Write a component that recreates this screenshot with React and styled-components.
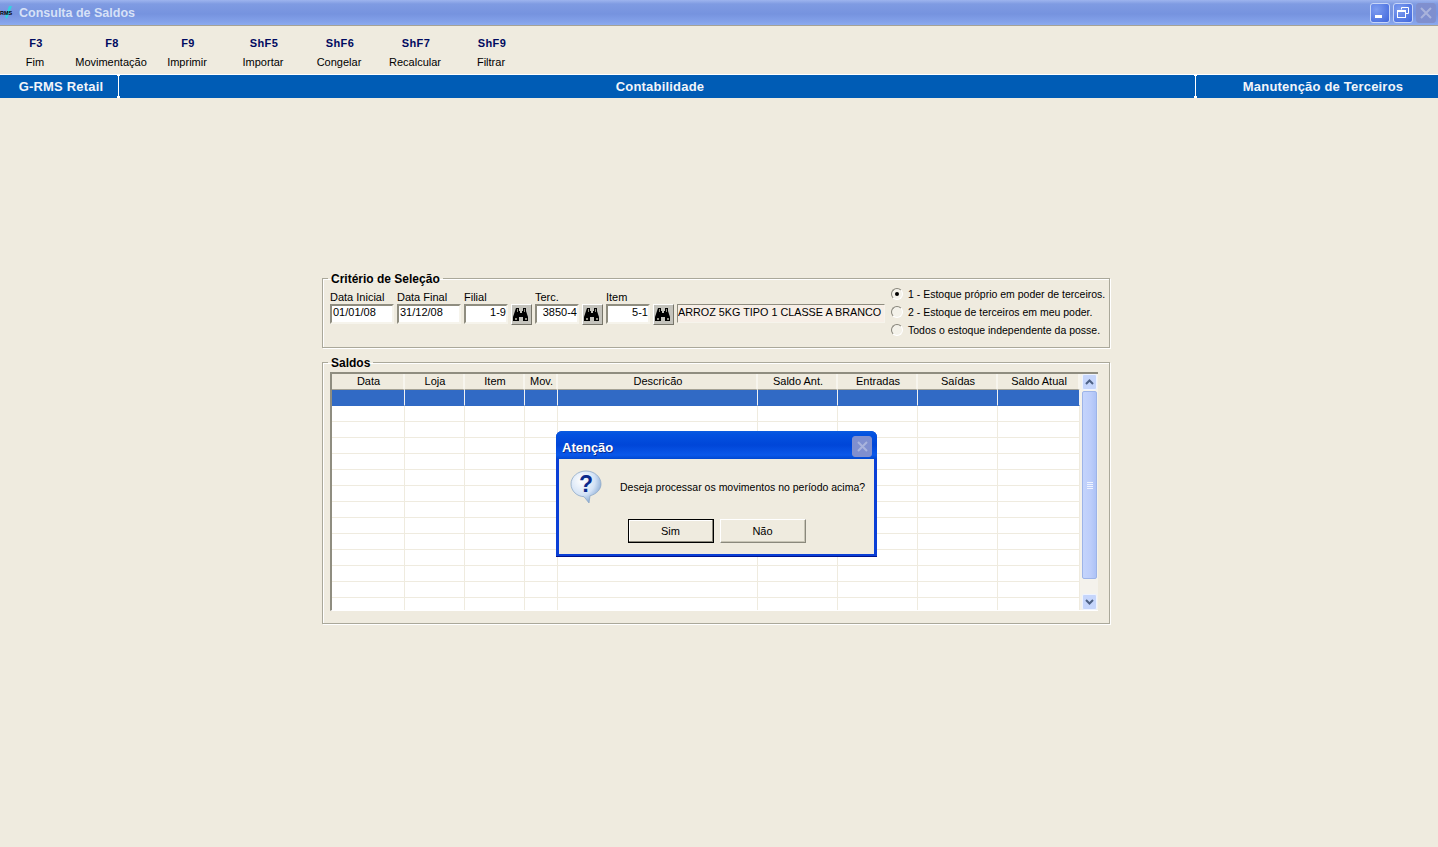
import React from 'react';
import styled, { createGlobalStyle } from 'styled-components';

const Global = createGlobalStyle`
    html, body {
        margin: 0;
        padding: 0;
        width: 1438px;
        height: 847px;
        overflow: hidden;
        background: #efebdf;
        font-family: "Liberation Sans", Arial, sans-serif;
        font-size: 11px;
        color: #000;
    }
`

const Screen = styled.div`
    position: relative;
    width: 1438px;
    height: 847px;
    background: #efebdf;
`

const TitleBar = styled.div`
    height: 26px;
    box-sizing: border-box;
    display: flex;
    align-items: center;
    justify-content: space-between;
    background: linear-gradient(#9db4ee 0, #7f9be2 4px, #7693df 14px, #84a2ea 22px, #8cabf0 25px);
    border-bottom: 1px solid #a5a296;
`

const TitleLeft = styled.div`
    display: flex;
    align-items: center;
    gap: 2px;
`

const TitleText = styled.span`
    font-size: 12.5px;
    font-weight: bold;
    color: #d6e1f7;
    margin-top: 1px;
`

const WinButtons = styled.div`
    display: flex;
    gap: 3px;
    padding-right: 2px;
`

const WinButton = styled.div`
    width: 20px;
    height: 20px;
    box-sizing: border-box;
    border: 1px solid ${p => p.$off ? '#8290cc' : '#c8d6f8'};
    border-radius: 3px;
    background: ${p => p.$off ? '#7f8fcf' : 'radial-gradient(circle at 30% 30%, #7e9df0, #3f66dc)'};
    display: flex;
    align-items: center;
    justify-content: center;
`

const Toolbar = styled.div`
    height: 48px;
    display: flex;
    gap: 4px;
`

const ToolButton = styled.div`
    width: 72px;
    display: flex;
    flex-direction: column;
    align-items: center;
    padding-top: 11px;
`

const ToolKey = styled.span`
    font-size: 11px;
    font-weight: bold;
    letter-spacing: 0.4px;
    color: #000a60;
    height: 19px;
    line-height: 13px;
`

const ToolLabel = styled.span`
    line-height: 13px;
    white-space: nowrap;
    margin-left: -2px;
`

const StatusBar = styled.div`
    height: 23px;
    display: flex;
    background: #005cb5;
    border-top: 1px solid #fff;
`

const StatusCell = styled.div`
    position: relative;
    width: ${p => p.$width}px;
    flex: ${p => p.$width ? 'none' : 1};
    box-sizing: border-box;
    padding-left: ${p => p.$pad}px;
    display: flex;
    align-items: center;
    justify-content: center;
    font-size: 13px;
    font-weight: bold;
    letter-spacing: 0.2px;
    color: #f2f5fa;
    border-right: ${p => p.$last ? 'none' : '1px solid #fff'};
    &::before, &::after {
        content: '';
        display: ${p => p.$last ? 'none' : 'block'};
        position: absolute;
        right: -2px;
        width: 3px;
        height: 2px;
        background: #fff;
    }
    &::before { top: -1px; }
    &::after { bottom: 0; }
`

const Content = styled.div`
    padding: 173px 0 0 322px;
    display: flex;
    flex-direction: column;
    gap: 7px;
`

const Group = styled.fieldset`
    width: 788px;
    min-width: 0;
    height: ${p => p.$height}px;
    box-sizing: border-box;
    margin: 0;
    padding: 0 0 0 8px;
    border: 1px solid #aaa89a;
    box-shadow: 1px 1px 0 #fff, inset 1px 1px 0 #fff;
`

const Legend = styled.legend`
    padding: 0 3px;
    margin-left: -3px;
    font-size: 12px;
    font-weight: bold;
    line-height: 14px;
    position: relative;
    top: 1px;
`

const CriteriaRow = styled.div`
    display: flex;
    align-items: flex-start;
    margin-left: -1px;
`

const Field = styled.div`
    display: flex;
    flex: none;
    flex-direction: column;
    width: ${p => p.$width}px;
    margin-right: 3px;
    padding-top: 6px;
`

const FieldLabel = styled.label`
    line-height: 13px;
    height: 13px;
    white-space: nowrap;
`

const InputBox = styled.div`
    height: 20px;
    box-sizing: border-box;
    background: #fff;
    border: 2px solid;
    border-color: #8f8d80 #f6f4ec #f6f4ec #8f8d80;
    padding: 0 ${p => p.$right ? 0 : 1}px;
    text-align: ${p => p.$right ? 'right' : 'left'};
    line-height: 13px;
    overflow: hidden;
    white-space: nowrap;
`

const SearchButton = styled.button`
    width: 21px;
    height: 21px;
    flex: none;
    margin: 19px 3px 0 0;
    padding: 0 1px 0 0;
    box-sizing: border-box;
    background: #c4c3bc;
    border: 1px solid;
    border-color: #fff #77756a #77756a #fff;
    display: flex;
    align-items: center;
    justify-content: center;
`

const DescBox = styled.div`
    width: 208px;
    height: 19px;
    flex: none;
    margin-top: 19px;
    box-sizing: border-box;
    background: #f7efe7;
    border: 1px solid;
    border-color: #8f8d80 #f6f4ec #f6f4ec #8f8d80;
    padding: 0;
    font-size: 10.8px;
    line-height: 15px;
    overflow: hidden;
`

const RadioList = styled.div`
    margin-left: 6px;
    display: flex;
    flex-direction: column;
    flex: none;
`

const RadioRow = styled.div`
    height: 18px;
    display: flex;
    align-items: center;
    gap: 5px;
    white-space: nowrap;
    font-size: 10.5px;
`

const RadioDot = styled.span`
    width: 12px;
    height: 12px;
    box-sizing: border-box;
    border-radius: 50%;
    background: #f4f2ea;
    border: 1px solid;
    border-color: #86847a #fff #fff #86847a;
    display: flex;
    align-items: center;
    justify-content: center;
    &::after {
        content: '';
        display: ${p => p.$checked ? 'block' : 'none'};
        width: 4px;
        height: 4px;
        border-radius: 50%;
        background: #000;
    }
`

const GridFrame = styled.div`
    display: flex;
    width: 768px;
    height: 239px;
    margin: 3px 0 0 -1px;
    border-left: 2px solid #8f8d80;
    border-top: 2px solid #8f8d80;
    box-sizing: border-box;
    border-bottom: 1px solid #fff;
`

const GridTable = styled.div`
    flex: 1;
    overflow: hidden;
    display: grid;
    grid-template-columns: 73px 60px 60px 33px 200px 80px 80px 80px 82px;
    grid-auto-rows: 16px;
    align-content: start;
`

const HeadCell = styled.div`
    box-sizing: border-box;
    background: #efebdf;
    border-right: 2px solid #f7f5ee;
    border-bottom: 1px solid #a5a296;
    padding-left: 2px;
    text-align: center;
    line-height: 15px;
    white-space: nowrap;
`

const BodyCell = styled.div`
    box-sizing: border-box;
    background: ${p => p.$selected ? '#316ac5' : '#fff'};
    border-right: 1px solid ${p => p.$selected ? '#f2f2f2' : '#efebdf'};
    border-bottom: 1px solid ${p => p.$selected ? '#316ac5' : '#efebdf'};
`

const ScrollBar = styled.div`
    width: 18px;
    flex: none;
    box-sizing: border-box;
    padding: 0 1px 0 2px;
    background: #f4f2ec;
    display: flex;
    flex-direction: column;
`

const ScrollArrow = styled.div`
    height: 16px;
    flex: none;
    box-sizing: border-box;
    background: #c5d5fb;
    border: 1px solid #eef3ff;
    border-radius: 2px;
    display: flex;
    align-items: center;
    justify-content: center;
`

const ScrollThumb = styled.div`
    height: 188px;
    margin: 1px 0 0;
    box-sizing: border-box;
    background: linear-gradient(90deg, #c4d4fc, #bccdfa 60%, #adc2f6);
    border: 1px solid #9db4e8;
    border-radius: 2px;
    display: flex;
    flex-direction: column;
    align-items: center;
    justify-content: center;
    gap: 1px;
`

const Grip = styled.span`
    width: 6px;
    height: 1px;
    background: #eef3ff;
`

const ScrollRest = styled.div`
    flex: 1;
`

const Dialog = styled.div`
    position: absolute;
    left: 556px;
    top: 431px;
    width: 321px;
    height: 126px;
    box-sizing: border-box;
    display: flex;
    flex-direction: column;
    background: #0a3fd6;
    border-radius: 6px 6px 0 0;
    padding: 0 3px 3px;
    box-shadow: inset 0 -1px 0 #00138c;
`

const DialogTitle = styled.div`
    height: 28px;
    flex: none;
    margin: 0 -3px;
    padding: 0 5px 0 6px;
    border-radius: 6px 6px 0 0;
    display: flex;
    align-items: center;
    justify-content: space-between;
    background: linear-gradient(#0a5ce0 0, #0352e0 3px, #0046d8 14px, #0a58ea 24px, #0048d0 28px);
`

const DialogCaption = styled.span`
    font-size: 13px;
    font-weight: bold;
    color: #fff;
    text-shadow: 1px 1px 0 #0a2c8c;
    margin-top: 4px;
`

const DialogClose = styled(WinButton)`
    height: 21px;
    margin-top: 2px;
`

const DialogBody = styled.div`
    flex: 1;
    background: #efebdf;
    display: flex;
    flex-direction: column;
    padding: 11px 0 0 11px;
`

const DialogMessage = styled.div`
    display: flex;
    align-items: center;
    gap: 18px;
    height: 34px;
    white-space: nowrap;
    font-size: 10.5px;
`

const DialogButtons = styled.div`
    display: flex;
    justify-content: center;
    gap: 6px;
    margin-top: 15px;
    margin-left: -11px;
`

const DialogButton = styled.button`
    width: 86px;
    height: 24px;
    padding: 0;
    box-sizing: border-box;
    background: #efebdf;
    font: inherit;
    color: #000;
    border: 1px solid;
    border-color: ${p => p.$focus ? '#000' : '#fff #8a887c #8a887c #fff'};
    box-shadow: ${p => p.$focus
        ? 'inset -1px -1px 0 #8a887c, inset 1px 1px 0 #fff'
        : 'inset -1px -1px 0 #c8c5b6'};
`

const QuestionSvg = styled.svg`
    flex: none;
`

const TOOLS = [
    ['F3', 'Fim'], ['F8', 'Movimentação'], ['F9', 'Imprimir'], ['ShF5', 'Importar'],
    ['ShF6', 'Congelar'], ['ShF7', 'Recalcular'], ['ShF9', 'Filtrar'],
];

const COLUMNS = ['Data', 'Loja', 'Item', 'Mov.', 'Descricão', 'Saldo Ant.', 'Entradas', 'Saídas', 'Saldo Atual'];

const RADIOS = [
    '1 - Estoque próprio em poder de terceiros.',
    '2 - Estoque de terceiros em meu poder.',
    'Todos o estoque independente da posse.',
];

const ROW_COUNT = 14;

const Binoculars = () => (
    <svg width="16" height="15" viewBox="0 0 16 15">
        <path d="M3 1h3v3h1v2h2V4h1V1h3v3l2 6v4H10v-4H6v4H0v-4l2-6z" fill="#000" />
        <path d="M2 11h2v2H2zM12 11h2v2h-2zM4 2h1v3H4zM11 2h1v3h-1z" fill="#8f8d80" />
    </svg>
);

const QuestionIcon = () => (
    <QuestionSvg width="32" height="34" viewBox="0 0 32 34">
        <defs>
            <radialGradient id="bubble" cx="35%" cy="30%" r="75%">
                <stop offset="0" stopColor="#ffffff" />
                <stop offset="0.6" stopColor="#d3e2f5" />
                <stop offset="1" stopColor="#7fa3d0" />
            </radialGradient>
        </defs>
        <path d="M16 1C7.500 1 1 7 1 14c0 7 6 12.500 13 12.700L19 33l1-7.200C26.500 24 31 19.500 31 14 31 7 24.500 1 16 1z"
            fill="url(#bubble)" stroke="#8fa9c8" strokeWidth="0.8" />
        <text x="16" y="22" textAnchor="middle" fontFamily="Liberation Sans, sans-serif"
            fontSize="23" fontWeight="bold" fill="#0a2a8c">?</text>
    </QuestionSvg>
);

const App = () => {
    return (
        <Screen>
            <Global />
            <TitleBar>
                <TitleLeft>
                    <svg width="17" height="16" viewBox="0 0 17 16">
                        <path d="M9 1h3L7 14l-2-2z" fill="#35d0e0" />
                        <text x="0" y="10" fontFamily="Liberation Sans, sans-serif" fontSize="5.500" fontWeight="bold" fill="#000">RMS</text>
                    </svg>
                    <TitleText>Consulta de Saldos</TitleText>
                </TitleLeft>
                <WinButtons>
                    <WinButton>
                        <svg width="14" height="14" viewBox="0 0 14 14"><rect x="2" y="9" width="7" height="3" fill="#fff" /></svg>
                    </WinButton>
                    <WinButton>
                        <svg width="14" height="14" viewBox="0 0 14 14" fill="none" stroke="#fff">
                            <path d="M5.500 3.500V1.500h7v6h-2.500" />
                            <rect x="1.500" y="4.500" width="8" height="7" />
                            <path d="M1.500 5.500h8" />
                        </svg>
                    </WinButton>
                    <WinButton $off>
                        <svg width="14" height="14" viewBox="0 0 14 14" stroke="#a9b3dc" strokeWidth="2">
                            <path d="M2 2l10 10M12 2L2 12" />
                        </svg>
                    </WinButton>
                </WinButtons>
            </TitleBar>
            <Toolbar>
                {TOOLS.map(([key, label]) => (
                    <ToolButton key={key}>
                        <ToolKey>{key}</ToolKey>
                        <ToolLabel>{label}</ToolLabel>
                    </ToolButton>
                ))}
            </Toolbar>
            <StatusBar>
                <StatusCell $width={119} $pad={4}>G-RMS Retail</StatusCell>
                <StatusCell $pad={6}>Contabilidade</StatusCell>
                <StatusCell $width={242} $pad={12} $last>Manutenção de Terceiros</StatusCell>
            </StatusBar>
            <Content>
                <Group $height={77}>
                    <Legend>Critério de Seleção</Legend>
                    <CriteriaRow>
                        <Field $width={64}>
                            <FieldLabel>Data Inicial</FieldLabel>
                            <InputBox>01/01/08</InputBox>
                        </Field>
                        <Field $width={64}>
                            <FieldLabel>Data Final</FieldLabel>
                            <InputBox>31/12/08</InputBox>
                        </Field>
                        <Field $width={44}>
                            <FieldLabel>Filial</FieldLabel>
                            <InputBox $right>1-9</InputBox>
                        </Field>
                        <SearchButton><Binoculars /></SearchButton>
                        <Field $width={44}>
                            <FieldLabel>Terc.</FieldLabel>
                            <InputBox $right>3850-4</InputBox>
                        </Field>
                        <SearchButton><Binoculars /></SearchButton>
                        <Field $width={44}>
                            <FieldLabel>Item</FieldLabel>
                            <InputBox $right>5-1</InputBox>
                        </Field>
                        <SearchButton><Binoculars /></SearchButton>
                        <DescBox>ARROZ 5KG TIPO 1 CLASSE A BRANCO LIP</DescBox>
                        <RadioList>
                            {RADIOS.map((text, i) => (
                                <RadioRow key={text}>
                                    <RadioDot $checked={i === 0} />
                                    {text}
                                </RadioRow>
                            ))}
                        </RadioList>
                    </CriteriaRow>
                </Group>
                <Group $height={269}>
                    <Legend>Saldos</Legend>
                    <GridFrame>
                        <GridTable>
                            {COLUMNS.map(col => <HeadCell key={col}>{col}</HeadCell>)}
                            {Array.from({ length: ROW_COUNT }).map((_, row) =>
                                COLUMNS.map(col => <BodyCell key={row + col} $selected={row === 0} />)
                            )}
                        </GridTable>
                        <ScrollBar>
                            <ScrollArrow>
                                <svg width="9" height="6" viewBox="0 0 9 6" fill="none" stroke="#4d6185" strokeWidth="2"><path d="M1 5l3.500-3.500L8 5" /></svg>
                            </ScrollArrow>
                            <ScrollThumb><Grip /><Grip /><Grip /><Grip /></ScrollThumb>
                            <ScrollRest />
                            <ScrollArrow>
                                <svg width="9" height="6" viewBox="0 0 9 6" fill="none" stroke="#4d6185" strokeWidth="2"><path d="M1 1l3.500 3.500L8 1" /></svg>
                            </ScrollArrow>
                        </ScrollBar>
                    </GridFrame>
                </Group>
            </Content>
            <Dialog>
                <DialogTitle>
                    <DialogCaption>Atenção</DialogCaption>
                    <DialogClose $off>
                        <svg width="13" height="13" viewBox="0 0 13 13" stroke="#a9b3dc" strokeWidth="2">
                            <path d="M2 2l9 9M11 2l-9 9" />
                        </svg>
                    </DialogClose>
                </DialogTitle>
                <DialogBody>
                    <DialogMessage>
                        <QuestionIcon />
                        <span>Deseja processar os movimentos no período acima?</span>
                    </DialogMessage>
                    <DialogButtons>
                        <DialogButton $focus>Sim</DialogButton>
                        <DialogButton>Não</DialogButton>
                    </DialogButtons>
                </DialogBody>
            </Dialog>
        </Screen>
    );
};

export default App;
